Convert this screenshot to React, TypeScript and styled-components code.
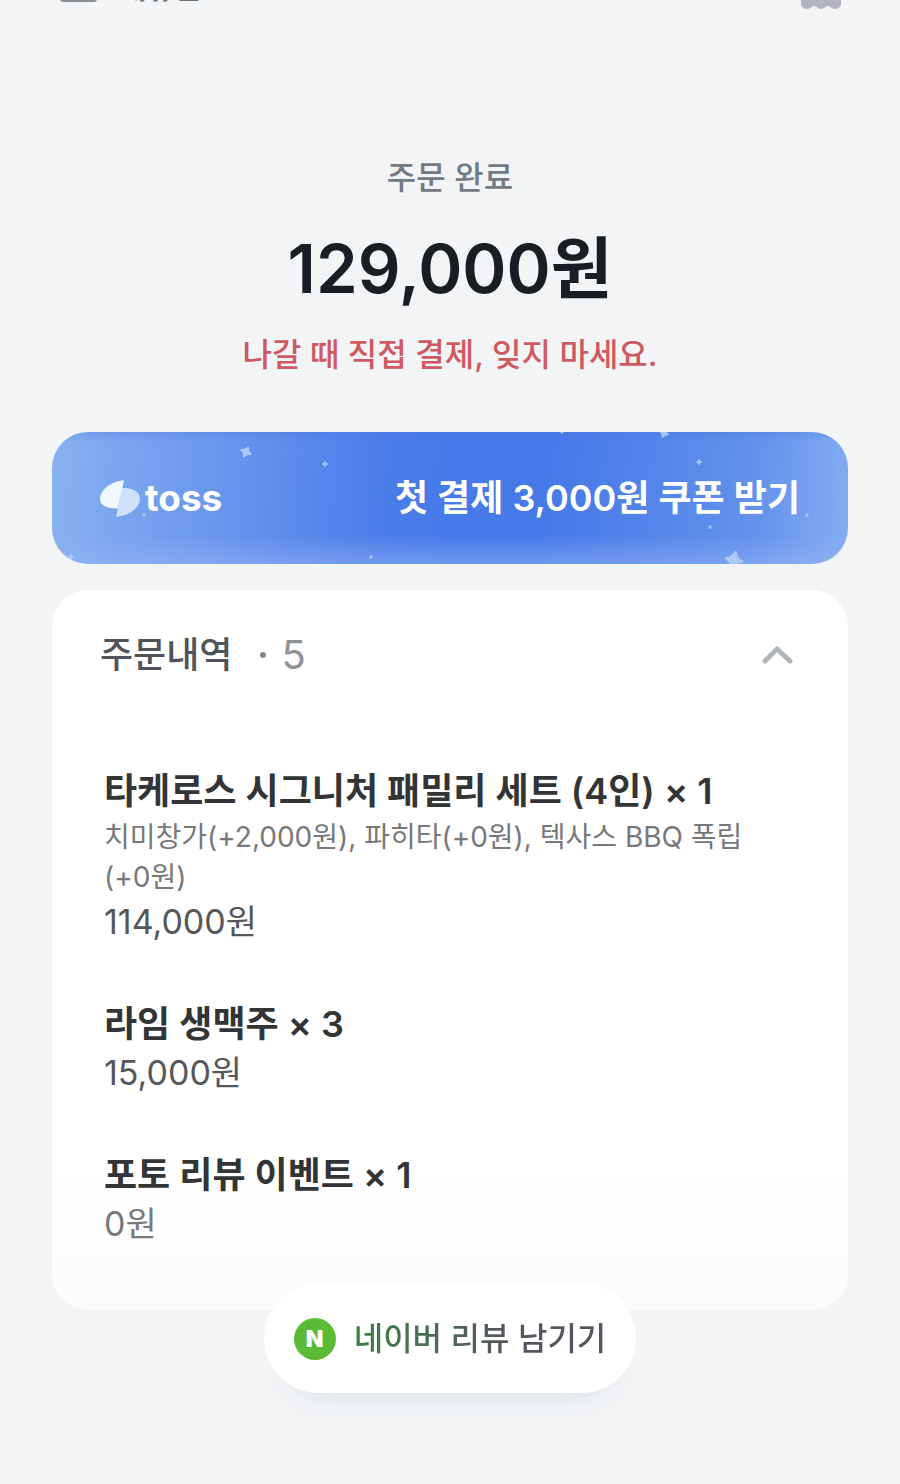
import React, { useState } from 'react';
import styled, { createGlobalStyle } from 'styled-components';

const GlobalStyle = createGlobalStyle`
  * { box-sizing: border-box; }
  body {
    margin: 0;
    background: #f2f4f6;
    font-family: Inter, "Noto Sans CJK KR", sans-serif;
    color: #333538;
  }
  h1, h2, h3, p, ul { margin: 0; padding: 0; }
  button { font: inherit; border: 0; background: none; padding: 0; cursor: pointer; }
`;

const Page = styled.div`
  min-height: 100vh;
  padding: 0 52px 90px;
  overflow: hidden;
  background: #f2f4f6;
`;

const TopBar = styled.header`
  display: flex;
  align-items: center;
  justify-content: space-between;
  height: 60px;
  margin-top: -43px;
  padding: 0 7px 0 8px;
`;

const MenuLink = styled.a`
  display: flex;
  align-items: center;
  gap: 22px;
  font-size: 30px;
  line-height: 36px;
  font-weight: 700;
  color: #6b7077;
  text-decoration: none;
`;

const IconButton = styled.button`
  display: flex;
`;

const Summary = styled.section`
  display: flex;
  flex-direction: column;
  align-items: center;
  padding: 141px 0 57px;
  text-align: center;
`;

const Status = styled.p`
  font-size: 32px;
  line-height: 40px;
  font-weight: 500;
  color: #727a84;
`;

const Amount = styled.h1`
  margin: 31px 0 26px;
  font-size: 67px;
  line-height: 80px;
  font-weight: 600;
  color: #191d24;
`;

const Notice = styled.p`
  font-size: 32px;
  line-height: 40px;
  font-weight: 500;
  color: #cf5960;
`;

const Banner = styled.a`
  position: relative;
  display: flex;
  align-items: center;
  justify-content: space-between;
  height: 132px;
  padding: 0 48px;
  border-radius: 36px;
  overflow: hidden;
  color: #fff;
  text-decoration: none;
  background:
    linear-gradient(to top, rgba(150, 180, 245, 0.5), rgba(150, 180, 245, 0) 22%),
    linear-gradient(to bottom, rgba(70, 115, 220, 0.25), rgba(70, 115, 220, 0) 8%),
    linear-gradient(93deg, #8ab2f2 0%, #79a4ef 9%, #6c98ed 20%, #5b8aeb 30%, #4b7de8 42%, #467ae8 50%, #467ae8 62%, #5585e9 76%, #6292eb 88%, #83acf1 100%);
`;

const Sparkles = styled.svg`
  position: absolute;
  inset: 0;
  width: 100%;
  height: 100%;
  pointer-events: none;
`;

const Brand = styled.span`
  display: flex;
  align-items: center;
  gap: 5px;
  font-size: 37px;
  line-height: 44px;
  font-weight: 700;
`;

const BannerText = styled.span`
  font-size: 36px;
  line-height: 48px;
  font-weight: 600;
`;

const Card = styled.section`
  margin-top: 26px;
  padding: 41px 52px 64px;
  border-radius: 36px;
  background: linear-gradient(to bottom, #fff 80%, #fafbfb 100%);
`;

const CardHeader = styled.div`
  display: flex;
  align-items: center;
  justify-content: space-between;
  margin: 0 0 0 -4px;
`;

const CardTitle = styled.h2`
  display: flex;
  align-items: center;
  font-size: 36px;
  line-height: 48px;
  font-weight: 500;
  color: #505359;
`;

const Dot = styled.span`
  width: 6px;
  height: 6px;
  margin: 0 15px 0 28px;
  border-radius: 50%;
  background: #85878a;
`;

const Count = styled.span`
  font-size: 40px;
  font-weight: 400;
  color: #8f9194;
`;

const Items = styled.ul`
  display: flex;
  flex-direction: column;
  gap: 56px;
  margin-top: 88px;
  list-style: none;
`;

const Item = styled.li`
  display: flex;
  flex-direction: column;
  gap: 2px;
`;

const ItemName = styled.h3`
  font-size: 36px;
  line-height: 48px;
  font-weight: 600;
  color: #333436;
`;

const ItemOptions = styled.p`
  font-size: 28px;
  line-height: 40px;
  color: #76787a;
  word-break: keep-all;
`;

const ItemPrice = styled.p<{ $muted?: boolean }>`
  font-size: 34px;
  line-height: 45px;
  color: ${(p) => (p.$muted ? '#77797b' : '#55575a')};
`;

const ReviewButton = styled.button`
  position: relative;
  display: flex;
  align-items: center;
  gap: 18px;
  height: 109px;
  margin: -26px auto 0;
  padding: 0 30px;
  border-radius: 55px;
  background: #fff;
  box-shadow: 0 28px 32px -28px rgba(60, 70, 90, 0.12);
`;

const NaverBadge = styled.span`
  display: flex;
  align-items: center;
  justify-content: center;
  width: 42px;
  height: 42px;
  border-radius: 50%;
  background: #5bbb35;
  color: #fff;
  font-size: 23px;
  line-height: 24px;
  font-weight: 900;
`;

const ReviewLabel = styled.span`
  font-size: 32px;
  line-height: 44px;
  font-weight: 500;
  color: transparent;
  background: linear-gradient(90deg, #3f7f42, #50655a 40%, #54565f 60%);
  background-clip: text;
  -webkit-background-clip: text;
`;

type OrderItem = { name: string; quantity: number; options?: string; price: string; muted?: boolean };

const orderItems: OrderItem[] = [
  {
    name: '타케로스 시그니처 패밀리 세트 (4인)',
    quantity: 1,
    options: '치미창가(+2,000원), 파히타(+0원), 텍사스 BBQ 폭립 (+0원)',
    price: '114,000원',
  },
  { name: '라임 생맥주', quantity: 3, price: '15,000원' },
  { name: '포토 리뷰 이벤트', quantity: 1, price: '0원', muted: true },
];

const stars = [
  { x: 194, y: 20, r: 6, turn: 25 },
  { x: 273, y: 32, r: 3, turn: 0 },
  { x: 510, y: 0, r: 2, turn: 0 },
  { x: 612, y: 1, r: 5, turn: 20 },
  { x: 647, y: 30, r: 3, turn: 0 },
  { x: 658, y: 95, r: 2, turn: 45 },
  { x: 755, y: 83, r: 2, turn: 45 },
  { x: 682, y: 128, r: 9, turn: 12 },
  { x: 319, y: 125, r: 2, turn: 45 },
  { x: 92, y: 83, r: 2, turn: 0 },
  { x: 19, y: 125, r: 3, turn: 0 },
];

export default function App() {
  const [open, setOpen] = useState(true);

  return (
    <Page>
      <GlobalStyle />
      <TopBar>
        <MenuLink href="#menu">
          <svg width="37" height="30" viewBox="0 0 37 30" aria-hidden="true">
            <rect width="37" height="30" rx="3" fill="#8b9096" />
          </svg>
          메뉴판
        </MenuLink>
        <IconButton type="button" aria-label="영수증">
          <svg width="40" height="44" viewBox="0 0 40 44" aria-hidden="true">
            <path
              d="M4 0H36Q40 0 40 4V40Q38 44 34 44C30 44 30 41 27 41C24 41 23 44 20 44C17 44 16 41 13 41C10 41 10 44 6 44Q2 44 0 40V4Q0 0 4 0Z"
              fill="#b0b6bf"
            />
          </svg>
        </IconButton>
      </TopBar>

      <main>
        <Summary>
          <Status>주문 완료</Status>
          <Amount>129,000원</Amount>
          <Notice>나갈 때 직접 결제, 잊지 마세요.</Notice>
        </Summary>

        <Banner href="#coupon">
          <Sparkles viewBox="0 0 796 132" preserveAspectRatio="xMidYMid slice" aria-hidden="true">
            {stars.map((s) => (
              <path
                key={`${s.x}-${s.y}`}
                d="M0-10Q2-2 10 0Q2 2 0 10Q-2 2-10 0Q-2-2 0-10Z"
                transform={`translate(${s.x} ${s.y}) rotate(${s.turn}) scale(${s.r / 10})`}
                fill="#b5d2fb"
                stroke="#b5d2fb"
                strokeWidth="2"
                opacity="0.85"
              />
            ))}
          </Sparkles>
          <Brand>
            <svg width="40" height="37" viewBox="0 0 120 110" aria-hidden="true">
              <path d="M67 24C98 22 120 36 120 56C120 82 88 107 48 110Z" fill="#cfe0fb" />
              <path d="M72 0C34 3 0 28 0 56C0 76 20 86 53 85L67 26Z" fill="#f0f8ff" />
            </svg>
            toss
          </Brand>
          <BannerText>첫 결제 3,000원 쿠폰 받기</BannerText>
        </Banner>

        <Card>
          <CardHeader>
            <CardTitle>
              주문내역
              <Dot />
              <Count>5</Count>
            </CardTitle>
            <IconButton type="button" aria-label="주문내역 접기" aria-expanded={open} onClick={() => setOpen(!open)}>
              <svg width="36" height="36" viewBox="0 0 36 36" aria-hidden="true">
                <path
                  d={open ? 'M5 24L17 12L30 24' : 'M5 12L17 24L30 12'}
                  fill="none"
                  stroke="#b1b4b8"
                  strokeWidth="5"
                  strokeLinecap="round"
                  strokeLinejoin="round"
                />
              </svg>
            </IconButton>
          </CardHeader>
          {open && (
            <Items>
              {orderItems.map((item) => (
                <Item key={item.name}>
                  <ItemName>
                    {item.name} × {item.quantity}
                  </ItemName>
                  {item.options && <ItemOptions>{item.options}</ItemOptions>}
                  <ItemPrice $muted={item.muted}>{item.price}</ItemPrice>
                </Item>
              ))}
            </Items>
          )}
        </Card>

        <ReviewButton type="button">
          <NaverBadge aria-hidden="true">N</NaverBadge>
          <ReviewLabel>네이버 리뷰 남기기</ReviewLabel>
        </ReviewButton>
      </main>
    </Page>
  );
}
